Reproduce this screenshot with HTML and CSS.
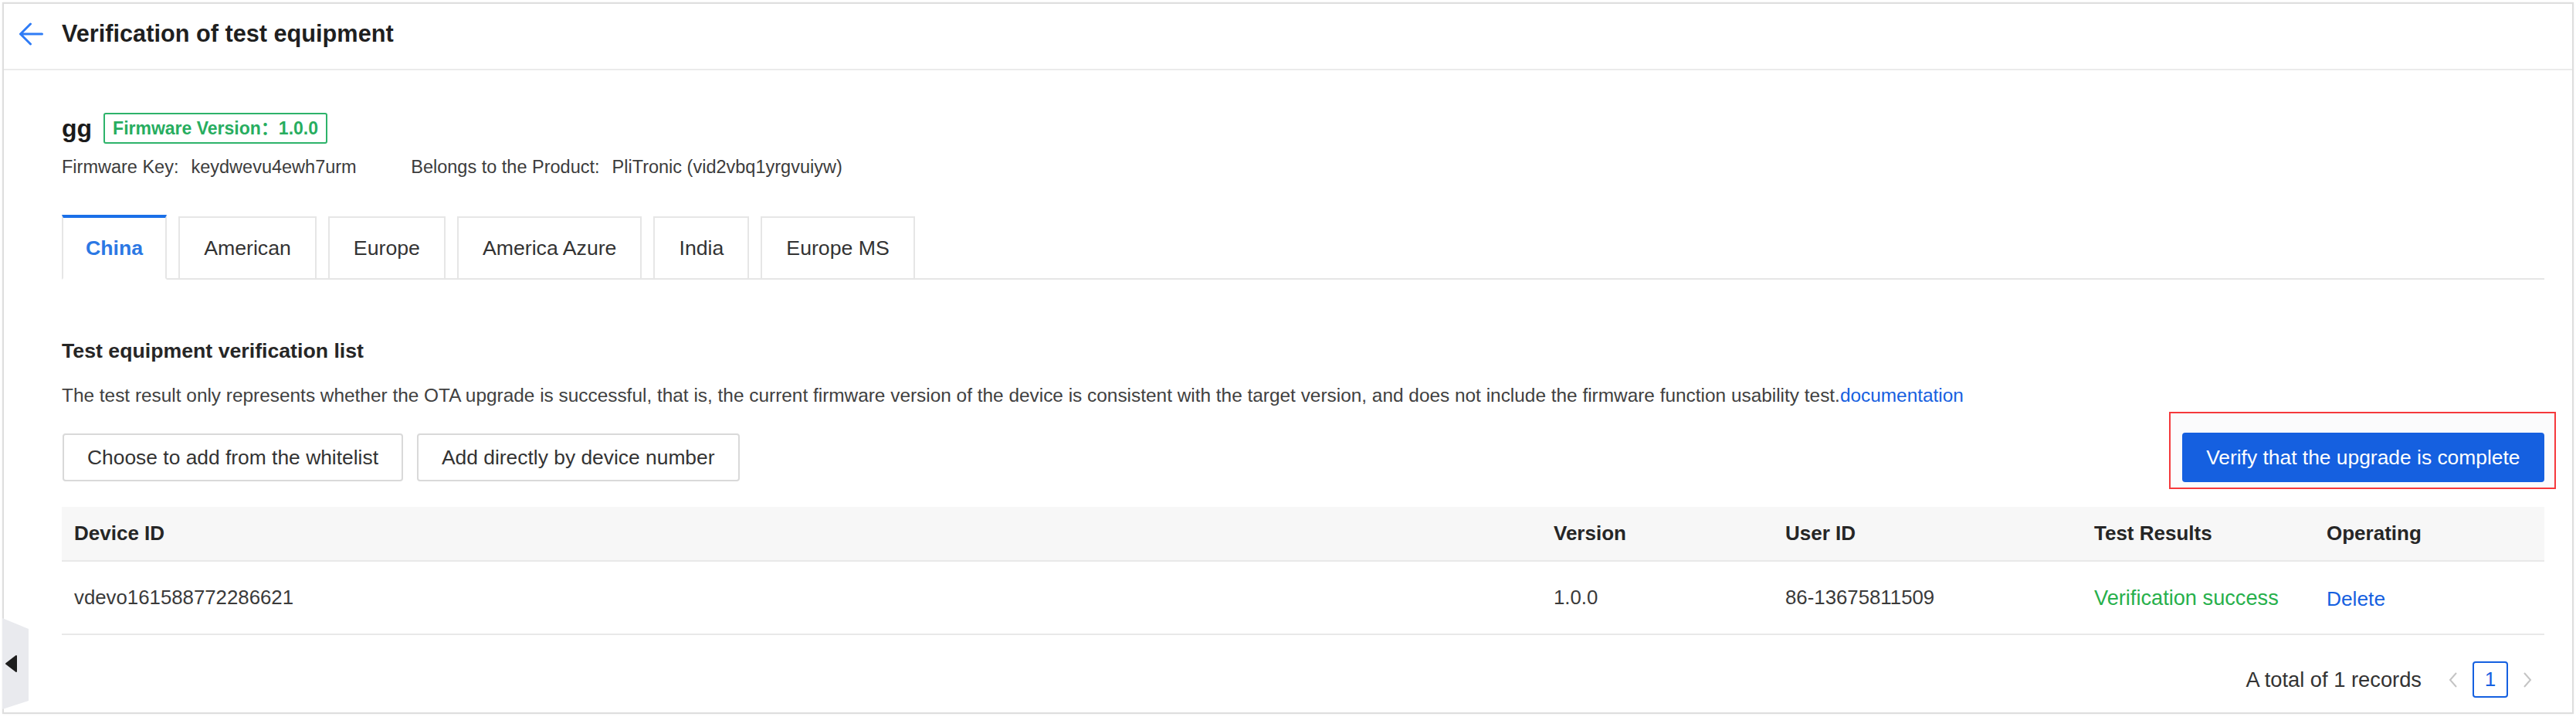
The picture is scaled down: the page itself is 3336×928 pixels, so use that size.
FILE: index.html
```html
<!DOCTYPE html>
<html lang="en">
<head>
<meta charset="utf-8">
<title>Verification of test equipment</title>
<link rel="stylesheet" href="styles.css">
</head>
<body>
<div class="card">
  <div class="header">
    <svg class="back" viewBox="0 0 32 30" width="32" height="30"><path d="M30.5 15H2.5M15.5 2L2.5 15L15.5 28" fill="none" stroke="#2f7cf6" stroke-width="3" stroke-linecap="round" stroke-linejoin="round"/></svg>
    <h1 class="title">Verification of test equipment</h1>
  </div>
  <div class="content">
    <div class="info-title">
      <span class="name">gg</span>
      <span class="badge">Firmware Version：1.0.0</span>
    </div>
    <div class="info-meta">
      <span class="meta-label">Firmware Key:</span><span class="meta-value">keydwevu4ewh7urm</span>
      <span class="meta-label meta-second">Belongs to the Product:</span><span class="meta-value">PliTronic (vid2vbq1yrgvuiyw)</span>
    </div>
    <div class="tabs">
      <div class="tab active">China</div>
      <div class="tab">American</div>
      <div class="tab">Europe</div>
      <div class="tab">America Azure</div>
      <div class="tab">India</div>
      <div class="tab">Europe MS</div>
    </div>
    <h2 class="section-title">Test equipment verification list</h2>
    <p class="desc">The test result only represents whether the OTA upgrade is successful, that is, the current firmware version of the device is consistent with the target version, and does not include the firmware function usability test.<a class="link" href="#">documentation</a></p>
    <div class="toolbar">
      <div class="toolbar-left">
        <button class="btn">Choose to add from the whitelist</button>
        <button class="btn">Add directly by device number</button>
      </div>
      <div class="verify-wrap">
        <button class="btn btn-primary">Verify that the upgrade is complete</button>
      </div>
    </div>
    <div class="table">
      <div class="trow thead">
        <div class="cell">Device ID</div>
        <div class="cell">Version</div>
        <div class="cell">User ID</div>
        <div class="cell">Test Results</div>
        <div class="cell">Operating</div>
      </div>
      <div class="trow tbody">
        <div class="cell">vdevo161588772286621</div>
        <div class="cell">1.0.0</div>
        <div class="cell">86-13675811509</div>
        <div class="cell success">Verification success</div>
        <div class="cell"><a class="op" href="#">Delete</a></div>
      </div>
    </div>
    <div class="pager">
      <span class="total">A total of 1 records</span>
      <svg class="chev" viewBox="0 0 14 20" width="14" height="20"><path d="M11 1L3 10L11 19" fill="none" stroke="#c4c4c4" stroke-width="2"/></svg>
      <span class="page">1</span>
      <svg class="chev" viewBox="0 0 14 20" width="14" height="20"><path d="M3 1L11 10L3 19" fill="none" stroke="#c4c4c4" stroke-width="2"/></svg>
    </div>
  </div>
  <div class="collapse">
    <svg viewBox="0 0 34 118" width="34" height="118"><polygon points="0,0 34,14 34,107 0,118" fill="#e9eaee"/><polygon points="5,59 18,49 18,69" fill="#1e1e1e" stroke="#1e1e1e" stroke-width="2" stroke-linejoin="round"/></svg>
  </div>
</div>
</body>
</html>
```

FILE: styles.css
```css
* { box-sizing: border-box; }
html, body { margin: 0; padding: 0; background: #ffffff; }
body {
  width: 3336px;
  height: 928px;
  padding: 3px 3px 4px 3px;
  font-family: "Liberation Sans", Arial, "Noto Sans CJK SC", sans-serif;
  color: #333333;
  overflow: hidden;
}
.card {
  position: relative;
  height: 921px;
  border: 2px solid #dedede;
  box-shadow: 0 0 3px rgba(0,0,0,0.06);
  background: #ffffff;
}
.header {
  height: 86px;
  border-bottom: 2px solid #ebebeb;
  display: flex;
  align-items: center;
  padding: 0 0 6px 19px;
}
.back { display: block; flex: none; }
.title {
  margin: 0 0 0 24px;
  font-size: 30.7px;
  font-weight: bold;
  color: #1f1f1f;
  line-height: 40px;
}
.content {
  padding: 55px 36px 0 75px;
}
.info-title {
  display: flex;
  align-items: center;
  height: 40px;
}
.name {
  font-size: 32px;
  font-weight: bold;
  color: #1a1a1a;
  line-height: 40px;
  margin-right: 15px;
}
.badge {
  height: 40px;
  border: 2px solid #2db36a;
  border-radius: 3px;
  padding: 0 10px;
  line-height: 36px;
  font-size: 23px;
  font-weight: bold;
  color: #27ad5f;
}
.info-meta {
  margin-top: 15px;
  line-height: 30px;
  font-size: 23.5px;
  color: #3c3c3c;
  white-space: nowrap;
}
.meta-value { margin-left: 16px; }
.meta-second { margin-left: 64px; }
.tabs {
  margin-top: 47px;
  display: flex;
  align-items: flex-end;
  border-bottom: 2px solid #e6e6e6;
}
.tab {
  height: 80px;
  border: 2px solid #e6e6e6;
  border-bottom: none;
  padding: 0 31px;
  line-height: 78px;
  font-size: 26.7px;
  color: #333333;
  margin-right: 15px;
  background: #fff;
}
.tab.active {
  height: 84px;
  border-top: 4px solid #1a6fe8;
  border-bottom: 2px solid #ffffff;
  margin-bottom: -2px;
  padding: 0 29px;
  font-weight: bold;
  color: #2b78e4;
}
.section-title {
  margin: 74px 0 0 0;
  font-size: 26.7px;
  font-weight: bold;
  line-height: 36px;
  color: #262626;
}
.desc {
  margin: 25px 0 0 0;
  font-size: 24.4px;
  line-height: 30px;
  color: #404040;
  white-space: nowrap;
}
.link { color: #1560e0; text-decoration: none; }
.toolbar {
  margin-top: 33px;
  display: flex;
  justify-content: space-between;
  align-items: center;
}
.toolbar-left { display: flex; padding-left: 1px; }
.btn {
  height: 62px;
  border: 2px solid #d9d9d9;
  border-radius: 4px;
  background: #ffffff;
  padding: 0 30px;
  font-family: inherit;
  font-size: 26.4px;
  color: #333333;
  margin-right: 18px;
  cursor: pointer;
}
.verify-wrap {
  position: relative;
  z-index: 0;
}
.verify-wrap::before {
  content: "";
  position: absolute;
  top: -27px;
  bottom: -9px;
  left: -17px;
  right: -15px;
  border: 2px solid #f5393c;
  background: #fbfbfc;
  z-index: -1;
}
.btn-primary {
  display: block;
  height: 64px;
  margin: 0;
  border: none;
  background: #1560e0;
  color: #ffffff;
  padding: 0 31.5px;
}
.table { margin-top: 32px; }
.trow {
  display: grid;
  grid-template-columns: 1fr 300px 400px 301px 298px;
  border-bottom: 2px solid #e9e9e9;
}
.thead {
  height: 71px;
  background: #f7f7f7;
  font-weight: bold;
  color: #262626;
}
.tbody { height: 95px; }
.cell {
  display: flex;
  align-items: center;
  padding-left: 16px;
  font-size: 26px;
  white-space: nowrap;
}
.tbody .cell { color: #3a3a3a; font-size: 25.8px; }
.tbody .success { color: #27b04b; font-size: 27.2px; }
.op { color: #1560e0; text-decoration: none; font-size: 26.3px; padding-top: 4px; }
.pager {
  margin-top: 34px;
  height: 47px;
  display: flex;
  justify-content: flex-end;
  align-items: center;
  padding-right: 15px;
}
.total { font-size: 27.3px; color: #333333; margin-right: 34px; }
.chev { display: block; }
.page {
  width: 46px;
  height: 47px;
  margin: 0 18px;
  border: 2px solid #1560e0;
  border-radius: 4px;
  color: #1560e0;
  font-size: 26px;
  line-height: 43px;
  text-align: center;
}
.collapse {
  position: absolute;
  left: -2px;
  top: 795px;
  width: 34px;
  height: 118px;
}
.collapse svg { display: block; }
```
